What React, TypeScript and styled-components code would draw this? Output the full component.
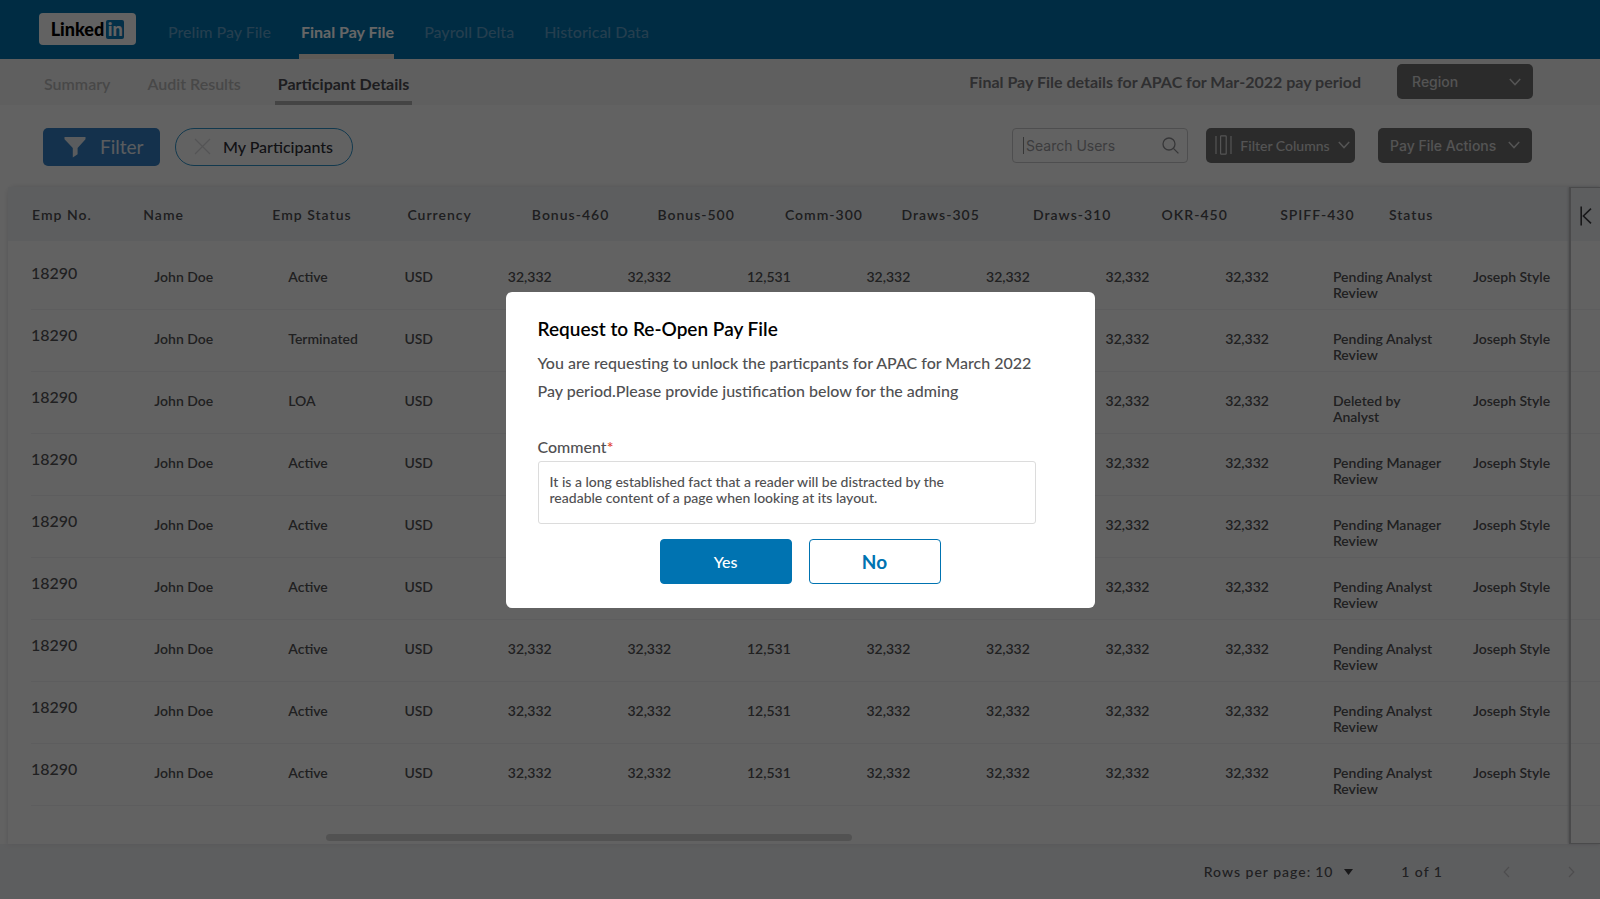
import React from "react";
import styled, { createGlobalStyle, css } from "styled-components";

const GlobalStyle = createGlobalStyle`
  *, *::before, *::after { box-sizing: border-box; }
  body {
    margin: 0;
    background: #f5f5f5;
    color: #505054;
    font-family: Lato, "Liberation Sans", sans-serif;
    font-size: 14px;
  }
  button, input, select, textarea { font: inherit; color: inherit; margin: 0; }
  a { color: inherit; text-decoration: none; }
`;

const Page = styled.div`
  display: flex;
  flex-direction: column;
  min-height: 100vh;
  overflow: hidden;
`;

/* ---------- top bar ---------- */

const TopBar = styled.header`
  display: flex;
  align-items: stretch;
  height: 59px;
  padding: 0 39px;
  background: #006fa8;
`;

const Logo = styled.a`
  display: flex;
  align-items: center;
  justify-content: center;
  gap: 2px;
  width: 97px;
  height: 32px;
  margin: 13px 30px 0 0;
  border-radius: 4px;
  background: #f6f6f6;
  color: #000;
  font-size: 18px;
  font-weight: 900;
  line-height: 20px;
`;

const LogoMark = styled.span`
  width: 18px;
  height: 19px;
  border-radius: 2px;
  background: #0a78b5;
  color: #f6f6f6;
  line-height: 18px;
  text-align: center;
`;

const TopNav = styled.nav`
  display: flex;
  gap: 28px;
`;

const TopLink = styled.a<{ $active?: boolean }>`
  padding: 20px 0 0 2px;
  border-bottom: 5px solid transparent;
  color: #5c9cc4;
  font-size: 16px;
  font-weight: 500;
  line-height: 24px;
  white-space: nowrap;
  ${(p) =>
    p.$active &&
    css`
      border-color: #e8e0d8;
      color: #fff;
      font-weight: 700;
    `}
`;

/* ---------- sub bar ---------- */

const SubBar = styled.div`
  display: flex;
  align-items: stretch;
  height: 46px;
  padding: 0 67px 0 41px;
  background: #eeeeee;
`;

const SubNav = styled.nav`
  display: flex;
  gap: 31px;
`;

const SubLink = styled.a<{ $active?: boolean }>`
  padding: 13px 3px 0;
  border-bottom: 4px solid transparent;
  color: #b4b4b4;
  font-size: 16px;
  font-weight: 600;
  line-height: 24px;
  white-space: nowrap;
  ${(p) =>
    p.$active &&
    css`
      border-color: #aaaaaa;
      color: #4a4a50;
      font-weight: 700;
    `}
`;

const PeriodTitle = styled.h1`
  margin: 11px 36px 0 auto;
  color: #77777a;
  font-size: 16px;
  font-weight: 700;
  line-height: 24px;
  white-space: nowrap;
`;

const darkControl = css`
  height: 35px;
  border: 0;
  border-radius: 5px;
  background: #6c6c6c;
  color: #d2d2d2;
`;

const RegionPicker = styled.label`
  ${darkControl}
  display: flex;
  align-items: center;
  width: 136px;
  margin-top: 5px;
  padding: 0 12px 0 15px;
`;

const RegionSelect = styled.select`
  flex: 1;
  min-width: 0;
  padding: 0;
  border: 0;
  background: none;
  appearance: none;
  font-family: Inter, "Liberation Sans", sans-serif;
  font-size: 14px;
  font-weight: 500;
`;

/* ---------- tools ---------- */

const Tools = styled.div`
  display: flex;
  align-items: center;
  height: 79px;
  padding: 4px 68px 0 43px;
`;

const FilterButton = styled.button`
  display: flex;
  align-items: center;
  gap: 14px;
  width: 117px;
  height: 38px;
  padding: 0 0 0 21px;
  border: 0;
  border-radius: 5px;
  background: #337cbd;
  color: #e0e6ec;
  font-size: 19px;
`;

const Chip = styled.button`
  display: flex;
  align-items: center;
  gap: 12px;
  width: 178px;
  height: 38px;
  margin-left: 15px;
  padding: 0 0 0 18px;
  border: 1px solid #2f8fc4;
  border-radius: 19px;
  background: none;
  color: #2c2c34;
  font-size: 16px;
  font-weight: 500;
  white-space: nowrap;
`;

const SearchTools = styled.div`
  display: flex;
  height: 38px;
  margin-left: auto;
`;

const SearchBox = styled.label`
  display: flex;
  align-items: center;
  width: 176px;
  height: 35px;
  padding: 0 8px 0 10px;
  border: 1px solid #c4c4c6;
  border-radius: 4px;
  color: #88888c;
`;

const Caret = styled.span`
  width: 1px;
  height: 17px;
  background: #888;
`;

const SearchInput = styled.input`
  flex: 1;
  min-width: 0;
  padding: 0 0 0 2px;
  border: 0;
  outline: 0;
  background: none;
  font-family: Inter, "Liberation Sans", sans-serif;
  font-size: 14px;
  &::placeholder { color: #97979b; opacity: 1; }
`;

const ColumnsButton = styled.button`
  ${darkControl}
  display: flex;
  align-items: center;
  justify-content: space-between;
  width: 149px;
  margin-left: 18px;
  padding: 0 5px 0 9px;
  font-size: 14px;
  font-weight: 500;
  white-space: nowrap;
`;

const ActionsButton = styled.button`
  ${darkControl}
  display: flex;
  align-items: center;
  justify-content: space-between;
  width: 154px;
  margin-left: 23px;
  padding: 0 12px;
  font-family: Inter, "Liberation Sans", sans-serif;
  font-size: 14px;
  font-weight: 500;
  white-space: nowrap;
`;

/* ---------- table ---------- */

const TableCard = styled.section`
  position: relative;
  flex: 1;
  margin: 3px 0 0 8px;
  border-radius: 8px 0 0 0;
  background: #f6f6f6;
  box-shadow: 0 0 4px 1px #dedee0;
`;

const Grid = styled.table`
  width: 100%;
  border-collapse: collapse;
  table-layout: fixed;
`;

const HeadRow = styled.tr`
  height: 54px;
  background: #e8eaee;
`;

const HeadCell = styled.th<{ $inset: number }>`
  padding: 0 0 0 ${(p) => p.$inset}px;
  color: #4c4c50;
  font-size: 14px;
  font-weight: 600;
  letter-spacing: 1px;
  text-align: left;
  white-space: nowrap;
`;

const Spacer = styled.tbody`
  height: 7px;
`;

const BodyRow = styled.tr`
  height: 62px;
  background: linear-gradient(#e9e9ec, #e9e9ec) no-repeat 23px 100% / 100% 1px;
`;

const BodyCell = styled.td<{ $inset: number }>`
  padding: 21px 0 0 ${(p) => p.$inset}px;
  font-size: 14px;
  font-weight: 600;
  line-height: 16px;
  vertical-align: top;
`;

const IdCell = styled.td`
  padding: 15px 0 0 23px;
  font-size: 16px;
  font-weight: 500;
  line-height: 20px;
  vertical-align: top;
`;

const StatusText = styled.span`
  display: block;
  max-width: 114px;
`;

const ScrollThumb = styled.div`
  width: 33%;
  height: 7px;
  margin: 28px 0 3px 20%;
  border-radius: 4px;
  background: #cecece;
`;

const SidePanel = styled.aside`
  position: absolute;
  inset: 0 0 0 auto;
  width: 31px;
  border-left: 2px solid #b8babc;
  border-top: 1px solid #b8babc;
  border-bottom: 1px solid #b8babc;
  box-shadow: -1px 0 2px #c8cacc;
`;

const PanelToggle = styled.button`
  display: flex;
  margin: 18px 0 0 9px;
  padding: 0;
  border: 0;
  background: none;
`;

/* ---------- pagination ---------- */

const Footer = styled.footer`
  display: flex;
  align-items: center;
  justify-content: flex-end;
  height: 55px;
  padding-right: 25px;
  background: #e9eaed;
  font-size: 14px;
  font-weight: 500;
  letter-spacing: 1px;
`;

const PageSize = styled.label`
  display: flex;
  align-items: center;
  gap: 4px;
`;

const PageSizeSelect = styled.select`
  width: 25px;
  padding: 0;
  border: 0;
  background: none;
  appearance: none;
  letter-spacing: 1px;
`;

const PageCount = styled.span`
  margin: 0 60px 0 48px;
`;

const PageButton = styled.button`
  display: flex;
  margin-left: 58px;
  padding: 0;
  border: 0;
  background: none;
  color: #c0c0c4;
  &:first-of-type { margin-left: 0; }
`;

/* ---------- dialog ---------- */

const Backdrop = styled.div`
  position: fixed;
  inset: 0;
  display: flex;
  align-items: center;
  justify-content: center;
  background: rgba(0, 0, 0, 0.6);
`;

const Dialog = styled.form`
  width: 589px;
  padding: 25px 32px 24px;
  border-radius: 6px;
  background: #fff;
  color: #505052;
  font-size: 16px;
  font-weight: 500;
`;

const DialogTitle = styled.h2`
  margin: 0;
  color: #000;
  font-size: 19px;
  font-weight: 600;
  line-height: 24px;
`;

const DialogText = styled.p`
  margin: 8px 0 28px;
  line-height: 28px;
`;

const CommentLabel = styled.label`
  display: block;
  line-height: 28px;
`;

const Required = styled.span`
  color: #e0442c;
`;

const CommentBox = styled.textarea`
  display: block;
  width: 498px;
  height: 63px;
  padding: 12px 64px 12px 11px;
  border: 1px solid #dcdcdc;
  border-radius: 3px;
  outline: 0;
  resize: none;
  font-size: 14px;
  line-height: 16px;
`;

const DialogActions = styled.div`
  display: flex;
  justify-content: center;
  gap: 17px;
  margin-top: 15px;
`;

const DialogButton = styled.button<{ $primary?: boolean }>`
  width: 132px;
  height: 45px;
  border: 1px solid #0073b1;
  border-radius: 4px;
  background: ${(p) => (p.$primary ? "#0073b1" : "#fff")};
  color: ${(p) => (p.$primary ? "#fff" : "#0073b1")};
  font-size: ${(p) => (p.$primary ? 16 : 19)}px;
  font-weight: ${(p) => (p.$primary ? 500 : 700)};
`;

/* ---------- icons ---------- */

const Chevron = () => (
  <svg width="12" height="8" viewBox="0 0 12 8" fill="none" stroke="currentColor" strokeWidth="1.5" aria-hidden="true">
    <path d="M0.8 1 6 6.6 11.2 1" />
  </svg>
);

const Funnel = () => (
  <svg width="22" height="22" viewBox="0 0 22 22" fill="currentColor" aria-hidden="true">
    <path d="M0.5 1h21v2.2L13.6 12v6.2L8.8 21.4V12L0.5 3.2z" />
  </svg>
);

const Cross = () => (
  <svg width="17" height="17" viewBox="0 0 17 17" stroke="#d2d2d4" strokeWidth="1.2" aria-hidden="true">
    <path d="M1 1 16 16M16 1 1 16" />
  </svg>
);

const Lens = () => (
  <svg width="17" height="17" viewBox="0 0 17 17" fill="none" stroke="currentColor" strokeWidth="1.3" aria-hidden="true">
    <circle cx="7" cy="7" r="6" />
    <path d="M11.4 11.4 16.4 16.4" />
  </svg>
);

const Columns = () => (
  <svg width="17" height="20" viewBox="0 0 17 20" fill="none" stroke="currentColor" strokeWidth="1.2" aria-hidden="true">
    <path d="M1 1v18M16 1v18" />
    <rect x="5.6" y="0.8" width="5.6" height="18.4" rx="0.6" />
  </svg>
);

const Collapse = () => (
  <svg width="12" height="20" viewBox="0 0 12 20" fill="none" stroke="#3c3c40" strokeWidth="1.6" aria-hidden="true">
    <path d="M1.2 0.5v19M11 2.6 3.4 10 11 17.4" />
  </svg>
);

const Triangle = () => (
  <svg width="9" height="6" viewBox="0 0 9 6" fill="#3c3c40" aria-hidden="true">
    <path d="M0 0h9L4.5 6z" />
  </svg>
);

const Arrow = ({ back }: { back?: boolean }) => (
  <svg width="7" height="12" viewBox="0 0 7 12" fill="none" stroke="currentColor" strokeWidth="1.2" aria-hidden="true">
    <path d={back ? "M6 1 1.2 6 6 11" : "M1 1 5.8 6 1 11"} />
  </svg>
);

/* ---------- data ---------- */

/* width is a share of the table; head and cell are the left insets of the column */
const columns = [
  { title: "Emp No.", width: "8.5%", head: 24, cell: 23 },
  { title: "Name", width: "8.1%", head: 0, cell: 11 },
  { title: "Emp Status", width: "8.3%", head: 0, cell: 16 },
  { title: "Currency", width: "6.5%", head: 3, cell: 0 },
  { title: "Bonus-460", width: "7.51%", head: 24, cell: 0 },
  { title: "Bonus-500", width: "7.51%", head: 30, cell: 0 },
  { title: "Comm-300", width: "7.51%", head: 38, cell: 0 },
  { title: "Draws-305", width: "7.51%", head: 35, cell: 0 },
  { title: "Draws-310", width: "7.51%", head: 47, cell: 0 },
  { title: "OKR-450", width: "7.51%", head: 56, cell: 0 },
  { title: "SPIFF-430", width: "6.77%", head: 55, cell: 0 },
  { title: "Status", width: "8.8%", head: 56, cell: 0 },
  { title: "", width: "auto", head: 0, cell: 0 },
];

const amounts = ["32,332", "32,332", "12,531", "32,332", "32,332", "32,332", "32,332"];

const people = [
  ["Active", "Pending Analyst Review"],
  ["Terminated", "Pending Analyst Review"],
  ["LOA", "Deleted by Analyst"],
  ["Active", "Pending Manager Review"],
  ["Active", "Pending Manager Review"],
  ["Active", "Pending Analyst Review"],
  ["Active", "Pending Analyst Review"],
  ["Active", "Pending Analyst Review"],
  ["Active", "Pending Analyst Review"],
].map(([status, review]) => ["18290", "John Doe", status, "USD", ...amounts, review, "Joseph Style"]);

const ParticipantTable = () => (
  <Grid>
    <colgroup>
      {columns.map((c, i) => (
        <col key={i} style={{ width: c.width }} />
      ))}
    </colgroup>
    <thead>
      <HeadRow>
        {columns.map((c, i) => (
          <HeadCell key={i} $inset={c.head} scope="col">{c.title}</HeadCell>
        ))}
      </HeadRow>
    </thead>
    <Spacer><tr><td colSpan={13} /></tr></Spacer>
    <tbody>
      {people.map((row, r) => (
        <BodyRow key={r}>
          {row.map((value, i) =>
            i === 0 ? (
              <IdCell key={i}>{value}</IdCell>
            ) : (
              <BodyCell key={i} $inset={columns[i].cell}>
                {i === 11 ? <StatusText>{value}</StatusText> : value}
              </BodyCell>
            )
          )}
        </BodyRow>
      ))}
    </tbody>
  </Grid>
);

export default function App() {
  return (
    <Page>
      <GlobalStyle />
      <TopBar>
        <Logo href="#" aria-label="LinkedIn">
          Linked<LogoMark>in</LogoMark>
        </Logo>
        <TopNav>
          <TopLink href="#">Prelim Pay File</TopLink>
          <TopLink href="#" $active>Final Pay File</TopLink>
          <TopLink href="#">Payroll Delta</TopLink>
          <TopLink href="#">Historical Data</TopLink>
        </TopNav>
      </TopBar>

      <SubBar>
        <SubNav>
          <SubLink href="#">Summary</SubLink>
          <SubLink href="#">Audit Results</SubLink>
          <SubLink href="#" $active>Participant Details</SubLink>
        </SubNav>
        <PeriodTitle>Final Pay File details for APAC for Mar-2022 pay period</PeriodTitle>
        <RegionPicker>
          <RegionSelect aria-label="Region"><option>Region</option></RegionSelect>
          <Chevron />
        </RegionPicker>
      </SubBar>

      <Tools>
        <FilterButton type="button"><Funnel />Filter</FilterButton>
        <Chip type="button"><Cross />My Participants</Chip>
        <SearchTools>
          <SearchBox>
            <Caret />
            <SearchInput type="text" placeholder="Search Users" aria-label="Search Users" />
            <Lens />
          </SearchBox>
          <ColumnsButton type="button"><Columns />Filter Columns<Chevron /></ColumnsButton>
          <ActionsButton type="button">Pay File Actions<Chevron /></ActionsButton>
        </SearchTools>
      </Tools>

      <TableCard>
        <ParticipantTable />
        <ScrollThumb />
        <SidePanel>
          <PanelToggle type="button" aria-label="Expand panel"><Collapse /></PanelToggle>
        </SidePanel>
      </TableCard>

      <Footer>
        <PageSize>
          Rows per page:
          <PageSizeSelect><option>10</option></PageSizeSelect>
          <Triangle />
        </PageSize>
        <PageCount>1 of 1</PageCount>
        <PageButton type="button" aria-label="Previous page"><Arrow back /></PageButton>
        <PageButton type="button" aria-label="Next page"><Arrow /></PageButton>
      </Footer>

      <Backdrop>
        <Dialog role="dialog" aria-modal="true" aria-labelledby="dialog-title">
          <DialogTitle id="dialog-title">Request to Re-Open Pay File</DialogTitle>
          <DialogText>
            You are requesting to unlock the particpants for APAC for March 2022
            <br />
            Pay period.Please provide justification below for the adming
          </DialogText>
          <CommentLabel htmlFor="comment">Comment<Required>*</Required></CommentLabel>
          <CommentBox
            id="comment"
            defaultValue="It is a long established fact that a reader will be distracted by the readable content of a page when looking at its layout."
          />
          <DialogActions>
            <DialogButton type="button" $primary>Yes</DialogButton>
            <DialogButton type="button">No</DialogButton>
          </DialogActions>
        </Dialog>
      </Backdrop>
    </Page>
  );
}
